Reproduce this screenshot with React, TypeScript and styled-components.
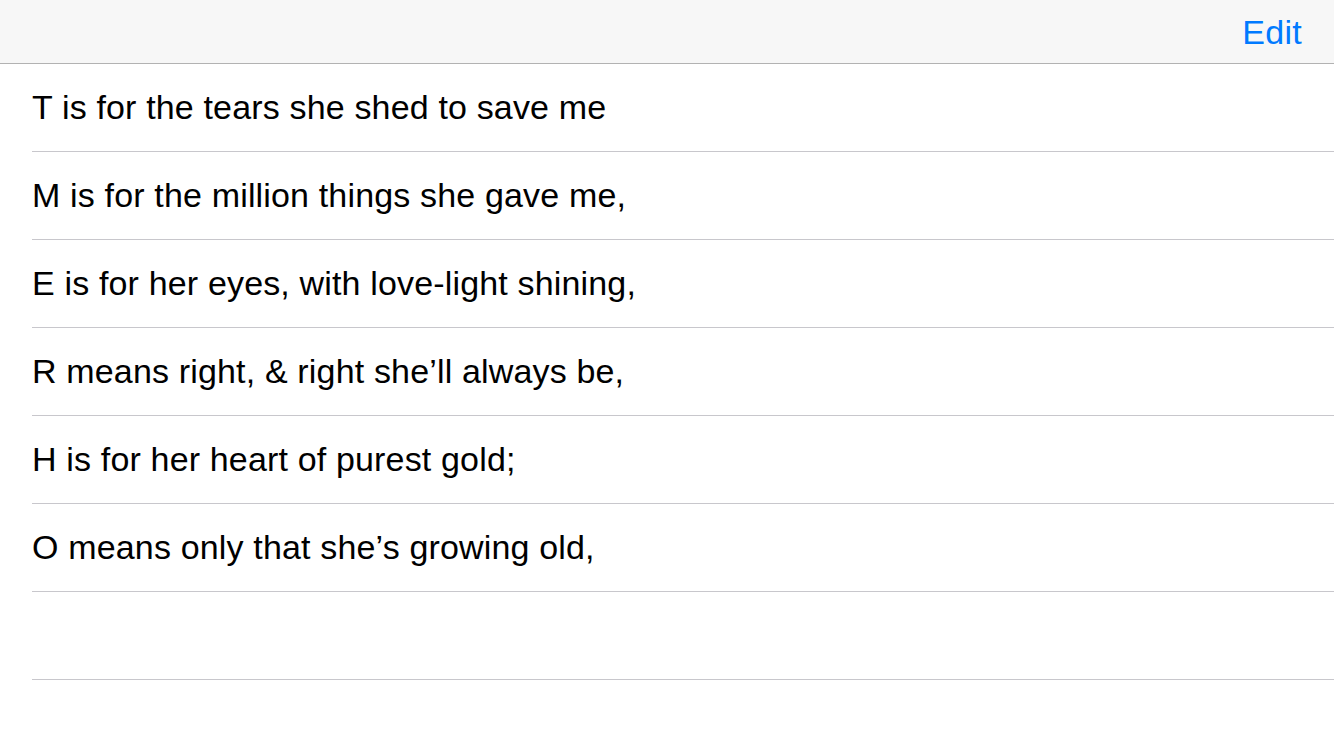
import React from 'react';
import styled, {createGlobalStyle} from 'styled-components';

const GlobalStyle = createGlobalStyle`
    html, body {
        margin: 0;
        padding: 0;
        background: #ffffff;
        font-family: "Liberation Sans", Arial, sans-serif;
        -webkit-font-smoothing: antialiased;
    }
`;

const Screen = styled.div`
    width: 1334px;
    height: 750px;
    overflow: hidden;
    background: #ffffff;
`;

const NavBar = styled.div`
    height: 63px;
    display: flex;
    align-items: center;
    justify-content: flex-end;
    padding: 0 32px;
    background: #f7f7f7;
    border-bottom: 1px solid #b2b2b2;
`;

const NavButton = styled.button`
    border: none;
    background: none;
    padding: 0;
    margin-top: 1px;
    font-family: inherit;
    font-size: 34px;
    letter-spacing: 0.3px;
    color: #007aff;
    cursor: pointer;
`;

const List = styled.ul`
    list-style: none;
    margin: 0;
    padding: 0 0 0 32px;
`;

const Row = styled.li`
    height: 87px;
    display: flex;
    align-items: center;
    border-bottom: 1px solid #c8c7cc;
    font-size: 34px;
    letter-spacing: 0.16px;
    color: #000000;
    white-space: nowrap;
`;

const lines = [
    'T is for the tears she shed to save me',
    'M is for the million things she gave me,',
    'E is for her eyes, with love-light shining,',
    'R means right, & right she\u2019ll always be,',
    'H is for her heart of purest gold;',
    'O means only that she\u2019s growing old,',
    '',
];

const App = () => {
    return (
        <>
            <GlobalStyle />
            <Screen>
                <NavBar>
                    <NavButton>Edit</NavButton>
                </NavBar>
                <List>
                    {lines.map((line, index) => (
                        <Row key={index}>{line}</Row>
                    ))}
                </List>
            </Screen>
        </>
    );
};

export default App;
